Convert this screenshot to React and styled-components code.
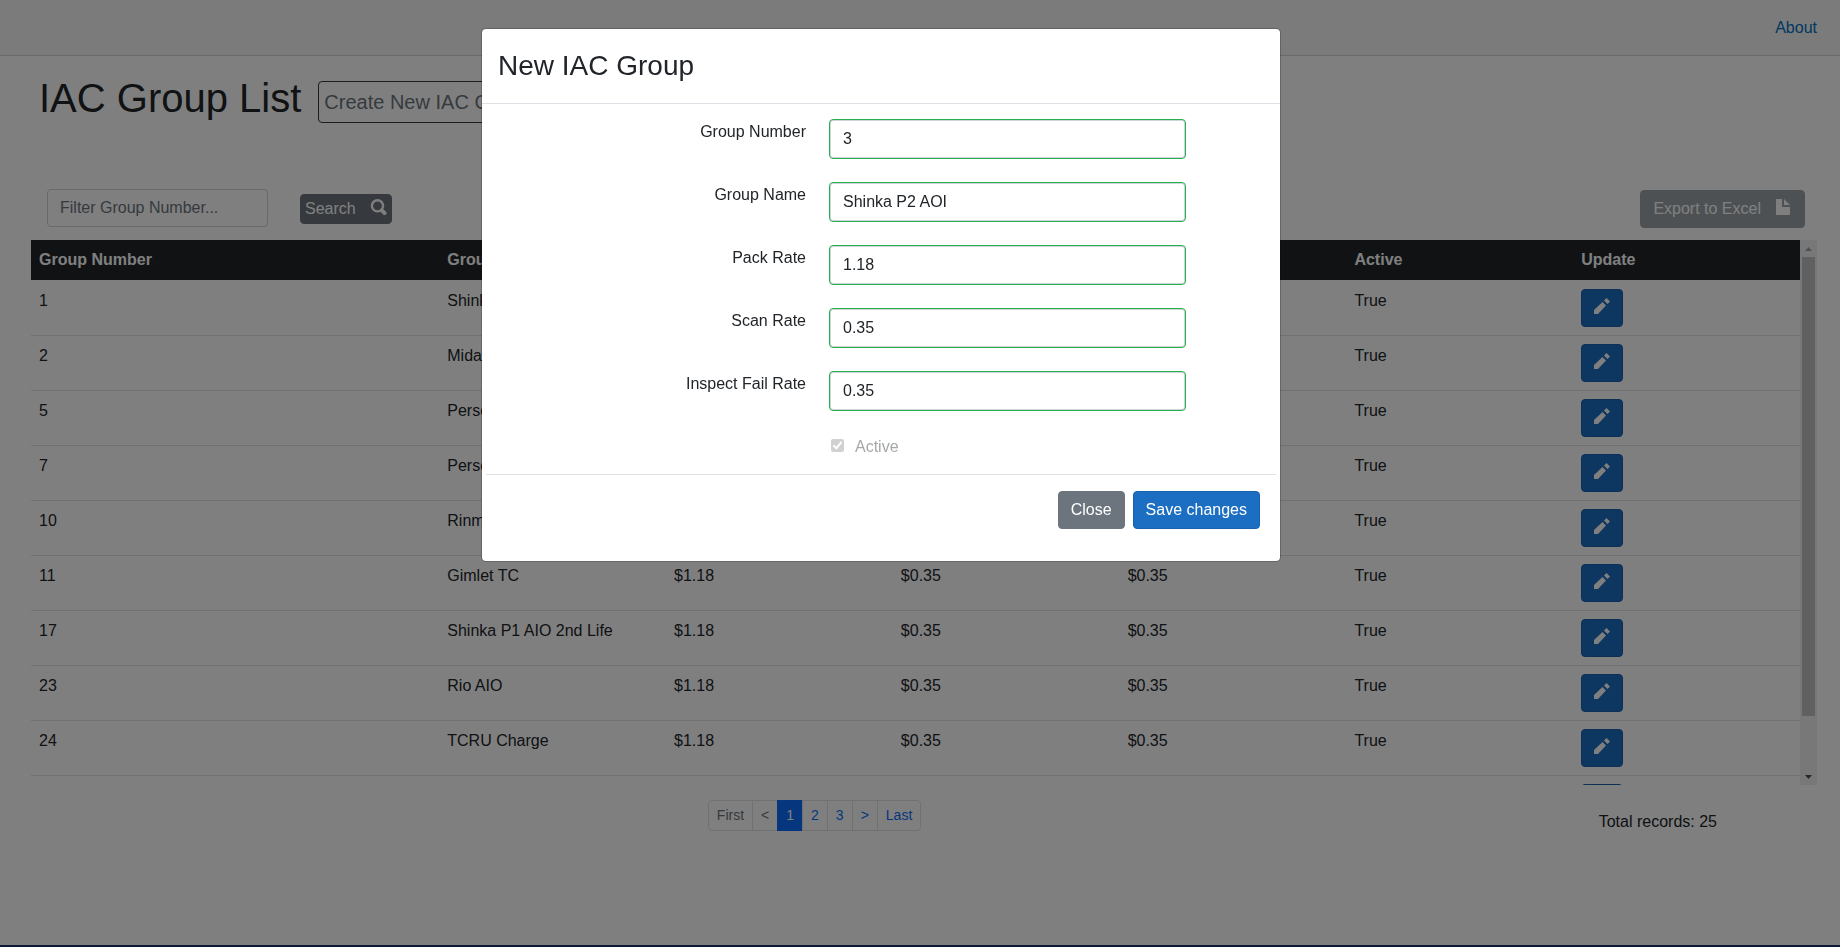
import React, { useState } from "react";
import styled, { createGlobalStyle } from "styled-components";

const GlobalStyle = createGlobalStyle`
  *, *::before, *::after { box-sizing: border-box; }
  body {
    margin: 0;
    background: #fff;
    color: #212529;
    font: 16px/24px "Liberation Sans", Arial, sans-serif;
  }
  button, input { font: inherit; }
`;

const Page = styled.div`
  min-height: 100vh;
  display: flex;
  flex-direction: column;
  border-bottom: 2px solid #1d2f6d;
`;

const TopBar = styled.header`
  display: flex;
  align-items: center;
  justify-content: flex-end;
  height: 56px;
  padding: 0 23px;
  background: #f7f7f7;
  border-bottom: 1px solid #d6d5d5;
`;

const NavLink = styled.a`
  color: #0071c1;
  text-decoration: none;
`;

const Content = styled.main`
  padding: 18px 23px 0 31px;
`;

const TitleRow = styled.div`
  display: flex;
  align-items: flex-start;
  gap: 17px;
  padding: 0 8px;
`;

const PageTitle = styled.h1`
  margin: 0;
  font-size: 40px;
  line-height: 48px;
  font-weight: 400;
`;

const CreateButton = styled.button`
  height: 42px;
  margin-top: 7px;
  padding: 0 5px;
  font-size: 20px;
  line-height: 30px;
  color: #6c757d;
  background: transparent;
  border: 1px solid #343a40;
  border-radius: 4px;
`;

const Toolbar = styled.div`
  display: flex;
  align-items: flex-start;
  margin-top: 66px;
  padding: 0 12px 12px 16px;
`;

const FilterInput = styled.input`
  width: 221px;
  height: 38px;
  padding: 0 12px;
  color: #495057;
  background: transparent;
  border: 1px solid #ced4da;
  border-radius: 4px;
  &::placeholder { color: #6c757d; opacity: 1; }
`;

const SolidButton = styled.button`
  display: inline-flex;
  align-items: center;
  justify-content: center;
  height: 38px;
  padding: 0 12px;
  color: #fff;
  background: ${(p) => (p.$tone === "primary" ? "#1b6ec2" : "#6c757d")};
  border: 1px solid ${(p) => (p.$tone === "primary" ? "#1861ac" : "#6c757d")};
  border-radius: 4px;
  svg { margin-bottom: 4px; }
`;

const SearchButton = styled(SolidButton)`
  height: 30px;
  margin: 5px 0 0 32px;
  padding: 0 4px;
  gap: 14px;
`;

const ExportButton = styled(SolidButton)`
  margin: 1px 0 0 auto;
  gap: 15px;
  background: #9ca3a8;
  border-color: #9ca3a8;
`;

const EditButton = styled(SolidButton)`
  width: 42px;
  padding: 0;
`;

const TableArea = styled.div`
  display: flex;
  height: 545px;
`;

const TableClip = styled.div`
  flex: 1;
  overflow: hidden;
`;

const DataTable = styled.table`
  width: 100%;
  table-layout: fixed;
  border-collapse: separate;
  border-spacing: 0;
  th {
    height: 41px;
    padding: 8px;
    text-align: left;
    color: #fff;
    background: #212529;
    background-clip: padding-box;
    border-bottom: 1px solid transparent;
  }
  th:first-child { width: 23.08%; }
  td {
    height: 55px;
    padding: 8px;
    vertical-align: top;
    border-bottom: 1px solid #dee2e6;
  }
  td > button { display: flex; }
`;

const ScrollTrack = styled.div`
  display: flex;
  flex-direction: column;
  align-items: center;
  width: 17px;
  background: #f1f1f1;
`;

const ScrollArrow = styled.span`
  display: flex;
  align-items: center;
  justify-content: center;
  height: 17px;
`;

const ScrollThumb = styled.div`
  width: 13px;
  height: 459px;
  margin-bottom: auto;
  background: #c1c1c1;
`;

const TableFooter = styled.footer`
  display: grid;
  grid-template-columns: 46fr auto 54fr;
  align-items: start;
  padding: 15px 100px 0 0;
`;

const Pagination = styled.nav`
  grid-column: 2;
  display: flex;
`;

const PageButton = styled.button`
  height: 31px;
  margin-left: -1px;
  padding: 0 8px;
  font-size: 14px;
  line-height: 21px;
  color: ${(p) => (p.$active ? "#fff" : "#0d6efd")};
  background: ${(p) => (p.$active ? "#0d6efd" : "#fff")};
  border: 1px solid ${(p) => (p.$active ? "#0d6efd" : "#dee2e6")};
  &:disabled { color: #6c757d; }
  &:first-child { border-radius: 4px 0 0 4px; }
  &:last-child { border-radius: 0 4px 4px 0; }
`;

const Total = styled.span`
  justify-self: end;
  padding-top: 10px;
`;

const Backdrop = styled.div`
  position: fixed;
  inset: 0;
  display: flex;
  align-items: flex-start;
  justify-content: center;
  padding: 28px 78px 28px 0;
  background: rgba(0, 0, 0, 0.5);
`;

const Dialog = styled.form`
  width: 800px;
  max-width: 100%;
  background: #fff;
  background-clip: padding-box;
  border: 1px solid rgba(0, 0, 0, 0.2);
  border-radius: 5px;
`;

const DialogHeader = styled.div`
  padding: 20px 16px;
  border-bottom: 1px solid #dee2e6;
`;

const DialogTitle = styled.h2`
  margin: 0;
  font-size: 28px;
  line-height: 34px;
  font-weight: 400;
`;

const DialogBody = styled.div`
  display: flex;
  flex-direction: column;
  gap: 23px;
  padding: 15px 94px 15px 16px;
`;

const Field = styled.div`
  display: grid;
  grid-template-columns: 1fr 357px;
  column-gap: 23px;
`;

const FieldLabel = styled.label`
  padding-top: 1px;
  text-align: right;
`;

const FieldInput = styled.input`
  height: 40px;
  width: 100%;
  padding: 0 13px;
  color: #212529;
  background: #fff;
  border: 1px solid #26b050;
  border-radius: 4px;
  box-shadow: inset 0 0 0 1px #ced4da;
  outline: none;
`;

const CheckLine = styled.label`
  grid-column: 2;
  display: flex;
  align-items: center;
  gap: 11px;
  padding: 1px 0 0 2px;
  color: #a5a8aa;
`;

const CheckBox = styled.input`
  appearance: none;
  display: block;
  width: 13px;
  height: 13px;
  margin: 0 0 3px;
  border-radius: 2px;
  background: #d1d1d1;
  position: relative;
  &:checked::after {
    content: "";
    position: absolute;
    left: 4px;
    top: 1px;
    width: 5px;
    height: 9px;
    border: solid #fff;
    border-width: 0 2px 2px 0;
    transform: rotate(40deg);
  }
`;

const DialogFooter = styled.div`
  display: flex;
  justify-content: flex-end;
  gap: 8px;
  margin: 0 4px;
  padding: 16px 16px 32px;
  border-top: 1px solid #dee2e6;
`;

const PencilIcon = () => (
  <svg width="16" height="16" viewBox="0 0 16 16" fill="currentColor" aria-hidden="true">
    <path d="M12.500 0L10 2.500 13.500 6 16 3.500zM8.500 4L0 12v4h4l8-8.500z" />
  </svg>
);

const SearchIcon = () => (
  <svg width="17" height="16" viewBox="0 0 17 16" fill="none" stroke="currentColor" aria-hidden="true">
    <circle cx="7.500" cy="6.800" r="5.600" strokeWidth="2.400" />
    <path d="M11.800 11.300l2.800 2.800" strokeWidth="3.800" strokeLinecap="round" />
  </svg>
);

const FileIcon = () => (
  <svg width="16" height="16" viewBox="0 0 8 8" fill="currentColor" aria-hidden="true">
    <path d="M0 0v8h7v-4h-4v-4h-3zm4 0v3h3l-3-3z" />
  </svg>
);

const ArrowIcon = ({ down }) => (
  <svg width="7" height="4" viewBox="0 0 7 4" fill={down ? "#505050" : "#a3a3a3"} aria-hidden="true">
    <path d={down ? "M0 0h7L3.500 4z" : "M0 4h7L3.500 0z"} />
  </svg>
);

const columns = ["Group Number", "Group Name", "Pack Rate", "Scan Rate", "Inspect Fail Rate", "Active", "Update"];

const rates = ["$1.18", "$0.35", "$0.35", "True"];

const groups = [
  ["1", "Shinka P1 AIO", ...rates],
  ["2", "Midas", ...rates],
  ["5", "Personal AIO", ...rates],
  ["7", "Personal TC", ...rates],
  ["10", "Rinmo", ...rates],
  ["11", "Gimlet TC", ...rates],
  ["17", "Shinka P1 AIO 2nd Life", ...rates],
  ["23", "Rio AIO", ...rates],
  ["24", "TCRU Charge", ...rates],
  ["", "", "", "", "", ""],
];

const pages = ["First", "<", "1", "2", "3", ">", "Last"];

const initialForm = {
  "Group Number": "3",
  "Group Name": "Shinka P2 AOI",
  "Pack Rate": "1.18",
  "Scan Rate": "0.35",
  "Inspect Fail Rate": "0.35",
};

export default function App() {
  const [form, setForm] = useState(initialForm);
  return (
    <>
      <GlobalStyle />
      <Page>
        <TopBar>
          <NavLink href="#about">About</NavLink>
        </TopBar>
        <Content>
          <TitleRow>
            <PageTitle>IAC Group List</PageTitle>
            <CreateButton type="button">Create New IAC Group</CreateButton>
          </TitleRow>
          <Toolbar>
            <FilterInput type="text" aria-label="Filter Group Number" placeholder="Filter Group Number..." />
            <SearchButton type="button">Search <SearchIcon /></SearchButton>
            <ExportButton type="button">Export to Excel <FileIcon /></ExportButton>
          </Toolbar>
          <TableArea>
            <TableClip>
              <DataTable>
                <thead>
                  <tr>{columns.map((c) => <th key={c} scope="col">{c}</th>)}</tr>
                </thead>
                <tbody>
                  {groups.map((cells, row) => (
                    <tr key={row}>
                      {cells.map((cell, i) => <td key={columns[i]}>{cell}</td>)}
                      <td>
                        <EditButton type="button" $tone="primary" aria-label={`Update group ${cells[0]}`}>
                          <PencilIcon />
                        </EditButton>
                      </td>
                    </tr>
                  ))}
                </tbody>
              </DataTable>
            </TableClip>
            <ScrollTrack>
              <ScrollArrow><ArrowIcon /></ScrollArrow>
              <ScrollThumb />
              <ScrollArrow><ArrowIcon down /></ScrollArrow>
            </ScrollTrack>
          </TableArea>
          <TableFooter>
            <Pagination aria-label="Pages">
              {pages.map((p, i) => (
                <PageButton key={p} type="button" $active={p === "1"} disabled={i < 2}>{p}</PageButton>
              ))}
            </Pagination>
            <Total>Total records: 25</Total>
          </TableFooter>
        </Content>
      </Page>
      <Backdrop>
        <Dialog role="dialog" aria-labelledby="dialog-title" onSubmit={(e) => e.preventDefault()}>
          <DialogHeader>
            <DialogTitle id="dialog-title">New IAC Group</DialogTitle>
          </DialogHeader>
          <DialogBody>
            {Object.entries(form).map(([label, value], i) => (
              <Field key={label}>
                <FieldLabel htmlFor={`field-${i}`}>{label}</FieldLabel>
                <FieldInput
                  id={`field-${i}`}
                  value={value}
                  onChange={(e) => setForm({ ...form, [label]: e.target.value })}
                />
              </Field>
            ))}
            <Field>
              <CheckLine>
                <CheckBox type="checkbox" defaultChecked disabled />
                Active
              </CheckLine>
            </Field>
          </DialogBody>
          <DialogFooter>
            <SolidButton type="button">Close</SolidButton>
            <SolidButton type="submit" $tone="primary">Save changes</SolidButton>
          </DialogFooter>
        </Dialog>
      </Backdrop>
    </>
  );
}
